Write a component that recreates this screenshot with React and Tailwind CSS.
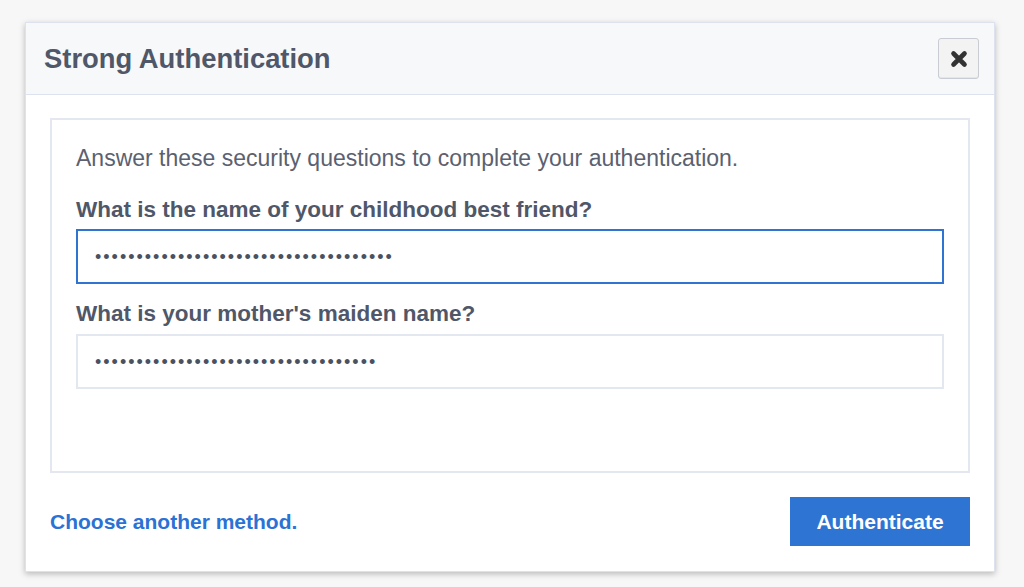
const Dots = ({ count }) => (
  <span className="tracking-[2px] text-[18px] leading-none text-[#4a5161]">
    {"•".repeat(count)}
  </span>
);

export default function App() {
  return (
    <div
      className="min-h-[587px] w-full bg-[#f7f7f7] pt-[22px] pl-[25px]"
      style={{ fontFamily: '"Liberation Sans", Arial, sans-serif' }}
    >
      <div className="w-[970px] h-[550px] bg-white border border-[#dde2ee] shadow-[0_2px_6px_rgba(0,0,0,0.25)] flex flex-col">
        <div className="h-[72px] bg-[#f7f8fa] border-b border-[#dde2ee] flex items-center justify-between pl-[18px] pr-[15px]">
          <h2 className="text-[27.4px] font-bold text-[#4f5768]">Strong Authentication</h2>
          <button className="w-[41px] h-[41px] rounded-[3px] border border-[#c9ccd2] bg-[#f3f3f4] shadow-[inset_0_-1px_0_rgba(0,0,0,0.05)] flex items-center justify-center">
            <svg width="18" height="18" viewBox="0 0 18 18">
              <path d="M3.5 3.5 L14.5 14.5 M14.5 3.5 L3.5 14.5" stroke="#333" strokeWidth="4.6" strokeLinecap="round" />
            </svg>
          </button>
        </div>

        <div className="flex-1 px-[24px] pt-[23px] pb-[25px] flex flex-col">
          <div className="h-[355px] border-2 border-[#e3e7f0] px-[24px] pt-[24px]">
            <p className="text-[23px] text-[#5b6170] leading-[28px]">
              Answer these security questions to complete your authentication.
            </p>
            <label className="block mt-[24px] text-[22.5px] font-bold text-[#4f5768] leading-[28px]">
              What is the name of your childhood best friend?
            </label>
            <div className="mt-[5px] h-[55px] border-2 border-[#2f74d0] flex items-center pl-[17px]">
              <Dots count={36} />
            </div>
            <label className="block mt-[16px] text-[22.5px] font-bold text-[#4f5768] leading-[28px]">
              What is your mother's maiden name?
            </label>
            <div className="mt-[6px] h-[55px] border-2 border-[#e3e7f0] flex items-center pl-[17px]">
              <Dots count={34} />
            </div>
          </div>

          <div className="mt-auto flex items-center justify-between">
            <a className="text-[21px] font-bold text-[#2b72d4] cursor-pointer">Choose another method.</a>
            <button className="w-[180px] h-[49px] bg-[#2e74d3] text-white text-[21px] font-bold">
              Authenticate
            </button>
          </div>
        </div>
      </div>
    </div>
  );
}
